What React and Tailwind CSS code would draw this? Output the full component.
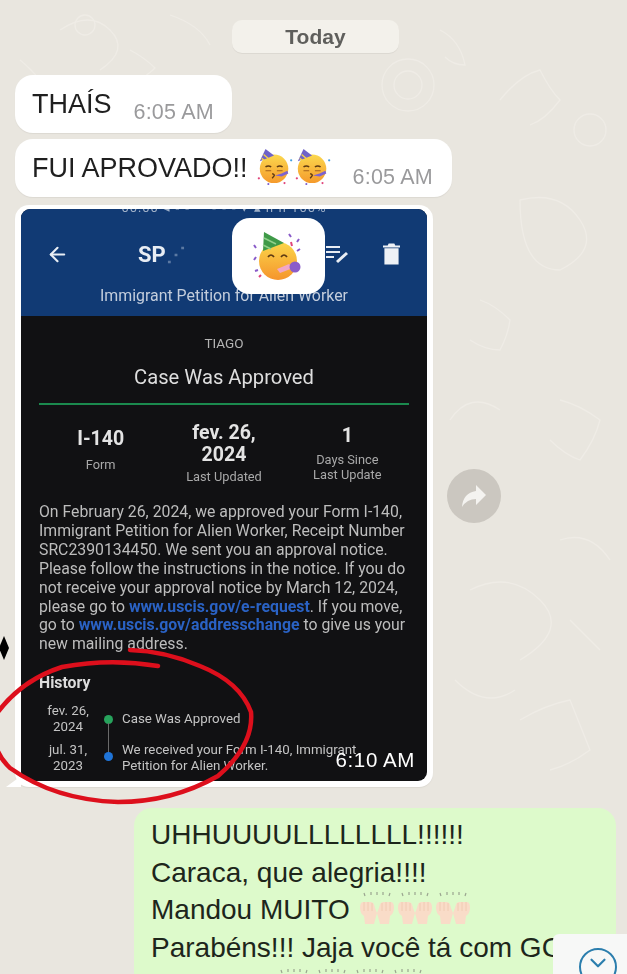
import React from "react";
import { ArrowLeft, ChevronDown } from "lucide-react";

const Time = ({ children }) => (
  <span className="text-[21.500px] leading-none tracking-[0.2px] text-[#9a9a9c] whitespace-nowrap">{children}</span>
);

// 🥳 drawn by hand, no emoji font in the sandbox
const PartyFace = ({ size = 38 }) => (
  <svg width={size} height={size} viewBox="0 0 40 40" className="shrink-0">
    <defs>
      <linearGradient id="faceFill" x1="0" y1="0" x2="0" y2="1">
        <stop offset="0" stopColor="#fbd84e" />
        <stop offset="1" stopColor="#f59a2c" />
      </linearGradient>
    </defs>
    <circle cx="19" cy="23" r="15" fill="url(#faceFill)" />
    <path d="M4 15 L10 2 L19 9 Z" fill="#6f63c9" />
    <path d="M8 8l5 4M6 12l4 3" stroke="#f6d24a" strokeWidth="1.4" />
    <path d="M10 21q3-2 6 0M22 21q3-2 6 0" stroke="#5d3a12" strokeWidth="1.6" fill="none" />
    <path d="M10 25h6M22 25h6" stroke="#a5601c" strokeWidth="1.3" />
    <path d="M20 30l7-2 6-3 1 3-7 3z" fill="#7d63d0" />
    <path d="M17 28q3 1 2 2.500t-2 2.500" stroke="#5d3a12" strokeWidth="1.5" fill="none" />
    <circle cx="3" cy="33" r="1.2" fill="#e0457b" />
    <circle cx="37" cy="14" r="1.2" fill="#45a0e0" />
    <circle cx="13" cy="39" r="1.1" fill="#7d63d0" />
    <circle cx="30" cy="38" r="1.1" fill="#e0457b" />
  </svg>
);

// smaller face on the white sticker, green hat and horn
const Sticker = () => (
  <svg width="52" height="50" viewBox="0 0 52 50">
    <defs>
      <linearGradient id="stickerFill" x1="0" y1="0" x2="0" y2="1">
        <stop offset="0" stopColor="#fbd64a" />
        <stop offset="1" stopColor="#f5952c" />
      </linearGradient>
    </defs>
    <circle cx="25" cy="30" r="19" fill="url(#stickerFill)" />
    <path d="M10 20 L11 1 L31 12 Z" fill="#3f9a48" />
    <path d="M11 7l12 6M10 14l8 4" stroke="#8fd08a" strokeWidth="1.6" />
    <path d="M15 26q3-4 6 0M28 26q3-4 6 0" stroke="#5d3a12" strokeWidth="1.7" fill="none" />
    <path d="M24 38l12-5 4 4-13 5z" fill="#f2a6c4" />
    <circle cx="42" cy="36" r="5.500" fill="#8a5cc9" />
    <path d="M1 14l2 3M3 26l-2 3M36 3l2 3M46 8l-2 3M44 20l3-2M2 40l3-1" stroke="#8a5cc9" strokeWidth="2" />
    <path d="M38 11l1 4M6 46l2-2" stroke="#e0457b" strokeWidth="2" />
  </svg>
);

// 🙌 pale skin tone
const Hands = ({ className = "" }) => (
  <svg width="38" height="32" viewBox="0 0 38 32" className={className}>
    <path d="M2 16q0-6 3-6h8q3 0 4 6l2 5-3 11h-9l-1-8q-4-3-4-8z" fill="#f9dcc8" />
    <path d="M36 16q0-6-3-6h-8q-3 0-4 6l-2 5 3 11h9l1-8q4-3 4-8z" fill="#f9dcc8" />
    <path d="M6 10v9M10 10v9M14 11v8M32 10v9M28 10v9M24 11v8" stroke="#efc7ac" strokeWidth="0.8" />
    <path d="M6 1l1 3M13 0v3M19 0v3M25 0v3M32 1l-1 3" stroke="#9aa58f" strokeWidth="1.2" />
  </svg>
);

const Doodles = () => (
  <svg className="absolute inset-0" width="627" height="974" fill="none" stroke="#efece6" strokeWidth="1.3">
    <circle cx="408" cy="85" r="26" />
    <circle cx="408" cy="85" r="14" />
    <path d="M440 30q20 10 25 35q-12 0-20-8M500 100q20-25 40-30q10 20 20 30q-15 20-30 25" />
    <path d="M520 200q40-10 60 20t-20 50q-40 0-40-70zM480 300q15 5 30 20q-2 15-10 30q-15 0-30-10" />
    <path d="M560 400q20 5 40 20q-5 20-20 40q-15-5-30-20M470 590q40-20 70 10t-20 60M520 720q25-15 50-20q10 25 20 50q-20 15-40 20" />
    <path d="M60 30q30-20 50 0t-10 40M130 50q15 8 25 18q-8 8-20 14M20 60q10 8 20 20M170 15q30 10 40 30" />
    <circle cx="85" cy="25" r="10" />
    <circle cx="590" cy="130" r="16" />
    <path d="M560 540q30-10 50 20M450 420q20-30 50-10M455 680q30 30 60 10M570 620q15 15 30 30" />
  </svg>
);

const Stat = ({ value, label, pad, gap, labelLead }) => (
  <div className={`flex flex-col items-center text-center ${pad}`}>
    <div className="text-[19.500px] leading-[22px] font-bold text-[#e4e4e4] whitespace-pre-line">{value}</div>
    <div className={`text-[12.800px] text-[#a9a9a9] whitespace-pre-line ${gap} ${labelLead}`}>{label}</div>
  </div>
);

const ScreenPhoto = () => (
  <div className="relative w-[406px] h-[572px] rounded-[9px] overflow-hidden bg-[#111113] font-['Roboto',sans-serif]">
    {/* app header */}
    <div className="relative h-[107px] bg-[#113a74] flex flex-col items-center">
      <div className="h-[5px] overflow-hidden w-full text-center text-[13px] leading-[5px] tracking-[1px] text-[#9fb0c8] whitespace-nowrap">
        <span className="relative top-[-4px]">00:00 ◂ ▫ ▫ &nbsp;&nbsp;&nbsp; ▪ ▪ ▪ ▾ ▴ ıı ıı 100%</span>
      </div>
      <div className="h-[80px] w-full pl-[25px] flex items-center text-white">
        <ArrowLeft size={23} strokeWidth={2.2} className="text-[#e8edf4]" />
        <span className="ml-[69px] text-[22px] font-bold text-[#e8edf4]">SP</span>
        <span className="text-[20px] font-bold text-[#8ea3c2] opacity-60">⋰</span>
        <span className="ml-[52px] text-[20px] text-[#9fb0c8]">⦙</span>
        <span className="ml-auto mr-[34px]">
          <svg width="24" height="20" viewBox="0 0 24 20" fill="none" stroke="#e8edf4" strokeWidth="2">
            <path d="M1 3h14M1 8h14M1 13h8" />
            <path d="M12 18l10-9" strokeWidth="3" />
          </svg>
        </span>
        <svg width="17" height="22" viewBox="0 0 18 22" fill="#eef1f6" className="mr-[27px]">
          <path d="M6 0h6l1 2h5v2H0V2h5zM1.500 5h15v17h-15z" />
        </svg>
      </div>
      <div className="text-[15.900px] leading-[18px] text-[#c3cddc] mt-[-7px]">Immigrant Petition for Alien Worker</div>
      {/* sticker sits on top of the screenshot */}
      <div className="absolute left-[211px] top-[9px] w-[93px] h-[76px] rounded-[18px] bg-white flex items-center justify-center">
        <Sticker />
      </div>
    </div>

    <div className="px-[18px] flex flex-col">
      <div className="mt-[20px] text-center text-[13.500px] leading-[14px] text-[#b5b5b5]">TIAGO</div>
      <div className="mt-[15px] text-center text-[20.200px] leading-[24px] text-[#dedede]">Case Was Approved</div>
      <div className="mt-[14px] h-[2px] bg-[#1b8a4e]" />
      <div className="grid grid-cols-3">
        <Stat value="I-140" label="Form" pad="pt-[23px]" gap="mt-[7px]" labelLead="leading-[15px]" />
        <Stat value={"fev. 26,\n2024"} label="Last Updated" pad="pt-[17px]" gap="mt-[3px]" labelLead="leading-[15px]" />
        <Stat value="1" label={"Days Since\nLast Update"} pad="pt-[20px]" gap="mt-[6px]" labelLead="leading-[14.500px]" />
      </div>
      <p className="mt-[19px] text-[15.800px] leading-[18.900px] text-[#bdbdbd] whitespace-nowrap">
        On February 26, 2024, we approved your Form I-140,<br />
        Immigrant Petition for Alien Worker, Receipt Number<br />
        SRC2390134450. We sent you an approval notice.<br />
        Please follow the instructions in the notice. If you do<br />
        not receive your approval notice by March 12, 2024,<br />
        please go to <span className="font-bold text-[#2a62c4]">www.uscis.gov/e-request</span>. If you move,<br />
        go to <span className="font-bold text-[#2a62c4]">www.uscis.gov/addresschange</span> to give us your<br />
        new mailing address.
      </p>
      <div className="mt-[20px] text-[15.800px] leading-[18px] font-bold text-[#dcdcdc]">History</div>

      <div className="mt-[11px] grid grid-cols-[58px_1fr] gap-x-[25px] text-[13.300px] leading-[16px] text-[#c4c4c4]">
        <div className="text-center">fev. 26,<br />2024</div>
        <div className="relative flex items-center h-[32px]">
          <span className="absolute left-[-18px] top-[12px] w-[9px] h-[9px] rounded-full bg-[#27a35c]" />
          <span className="absolute left-[-14px] top-[20px] w-px h-[30px] bg-[#6a6a6a]" />
          Case Was Approved
        </div>
        <div className="text-center mt-[7px]">jul. 31,<br />2023</div>
        <div className="relative mt-[7px] whitespace-nowrap">
          <span className="absolute left-[-18px] top-[10px] w-[9px] h-[9px] rounded-full bg-[#1f74d8]" />
          We received your Form I-140, Immigrant<br />Petition for Alien Worker.
        </div>
      </div>
    </div>

    <span className="absolute right-[12px] bottom-[11px] font-['Liberation_Sans',sans-serif] text-[20.500px] leading-none tracking-[0.6px] text-white">6:10 AM</span>
  </div>
);

export default function App() {
  return (
    <div className="relative w-[627px] h-[974px] overflow-hidden bg-[#e9e6df] font-['Liberation_Sans',sans-serif]">
      <Doodles />

      <div className="relative flex flex-col pt-[20px] blur-[0.4px]">
        <div className="self-center ml-[4px] w-[167px] h-[33px] rounded-[10px] bg-[#f3f1eb] flex items-center justify-center text-[21px] font-bold text-[#5f5f5c] shadow-[0_1px_0_#dcd9d2]">
          Today
        </div>

        <div className="mt-[22px] ml-[15px] w-[217px] h-[58px] rounded-[18px] bg-white flex items-center pl-[17px] text-[27px] text-[#1f1f1f] shadow-[0_1px_1px_#dcd9d2]">
          THAÍS
          <span className="ml-[22px] mt-[17px] flex"><Time>6:05 AM</Time></span>
        </div>

        <div className="mt-[6px] ml-[15px] w-[437px] h-[58px] rounded-[18px] bg-white flex items-center pl-[17px] text-[27px] text-[#1f1f1f] shadow-[0_1px_1px_#dcd9d2]">
          FUI APROVADO!!
          <span className="ml-[8px] flex mb-[4px]">
            <PartyFace />
            <PartyFace />
          </span>
          <span className="ml-[21px] mt-[19px] flex"><Time>6:05 AM</Time></span>
        </div>

        <div className="mt-[8px] ml-[15px] flex items-center gap-[14px]">
          <div className="relative w-[418px] h-[582px] rounded-[14px] bg-white pl-[6px] pt-[4px] shadow-[0_1px_1px_#dcd9d2]">
            <ScreenPhoto />
            <span className="absolute left-[-9px] bottom-0 w-[15px] h-[11px] bg-white [clip-path:polygon(100%_0,100%_100%,0_100%)]" />
          </div>
          <div className="w-[54px] h-[54px] rounded-full bg-[#cbc7c0] flex items-center justify-center">
            <svg width="26" height="24" viewBox="0 0 26 24" fill="#f4f3f0">
              <path d="M15 1l10 10-10 10v-6Q6 15 1 23q1-14 14-16z" />
            </svg>
          </div>
        </div>

        <div className="mt-[21px] ml-[134px] w-[482px] h-[220px] rounded-[18px] bg-[#ddfacb] pl-[17px] pt-[8px] text-[28px] leading-[37.500px] text-[#1d261b] whitespace-nowrap">
          <div>UHHUUUULLLLLLLL!!!!!!</div>
          <div>Caraca, que alegria!!!!</div>
          <div className="flex items-center">
            Mandou MUITO
            <span className="flex ml-[8px] mt-[-3px]">
              <Hands />
              <Hands />
              <Hands />
            </span>
          </div>
          <div>Parabéns!!! Jaja você tá com GC</div>
          <div className="flex justify-center pr-[66px] mt-[3px]">
            <Hands />
            <Hands />
            <Hands />
            <Hands />
          </div>
        </div>
      </div>

      {/* marks drawn over the chat */}
      <svg className="absolute inset-0 pointer-events-none" width="627" height="974" fill="none">
        <path
          d="M158 666 Q110 658 62 667 Q22 680 -2 712 Q-14 745 10 768 Q55 800 118 802 Q172 802 218 776 Q254 745 251 712 Q240 682 200 666 Q165 651 130 650"
          stroke="#dd0f1c"
          strokeWidth="4.500"
          strokeLinecap="round"
        />
        <path d="M4 636 L9 648 L4 660 L-1 648 Z" fill="#000" />
      </svg>

      <div className="absolute right-0 bottom-0 w-[74px] h-[40px] rounded-tl-[6px] bg-[#f7f8f7] flex justify-center pl-[16px]">
        <span className="mt-[14px] w-[38px] h-[38px] shrink-0 rounded-full border-2 border-[#2b7ead] flex justify-center text-[#2b7ead]">
          <ChevronDown size={26} strokeWidth={2} />
        </span>
      </div>
    </div>
  );
}
